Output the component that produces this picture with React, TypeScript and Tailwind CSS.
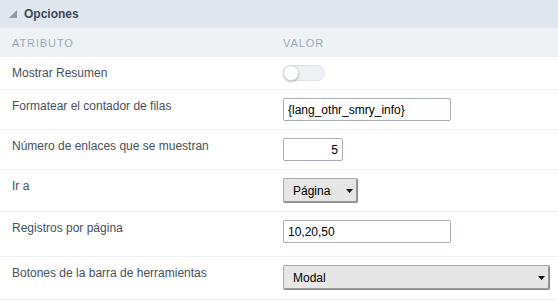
import React from 'react';

const font = { fontFamily: '"Liberation Sans", Arial, sans-serif' };

function Toggle() {
  return (
    <div className="relative h-[16px] w-[42px] rounded-full border border-[#dfe4e9] bg-[#eef1f4]">
      <div className="absolute -left-px -top-px h-[16px] w-[16px] rounded-full border border-[#d5d9de] bg-white shadow-[0_1px_2px_rgba(0,0,0,0.25)]" />
    </div>
  );
}

function TextInput({ value, width, right }: { value: string; width: string; right?: boolean }) {
  return (
    <div
      className={`flex h-[23px] items-center rounded-[2px] border border-[#a6adb5] bg-white px-[4px] text-[12px] text-black ${width} ${
        right ? 'justify-end' : ''
      }`}
    >
      {value}
    </div>
  );
}

function Select({ value, width }: { value: string; width: string }) {
  return (
    <div
      className={`flex h-[25px] items-center justify-between rounded-[2px] border border-[#a9a9a9] border-b-[#8c8c8c] border-r-[#8c8c8c] bg-[#e6e6e6] pl-[9px] pr-[4px] text-[12px] text-black shadow-[inset_-1px_-1px_0_#9a9a9a] ${width}`}
    >
      <span>{value}</span>
      <svg width="7" height="4" viewBox="0 0 7 4">
        <polygon points="0,0 7,0 3.5,4" fill="#111" />
      </svg>
    </div>
  );
}

const rows: Array<{ label: string; h: string; value: React.ReactNode }> = [
  { label: 'Mostrar Resumen', h: 'h-[33px]', value: <Toggle /> },
  { label: 'Formatear el contador de filas', h: 'h-[40px]', value: <TextInput value="{lang_othr_smry_info}" width="w-[168px]" /> },
  { label: 'Número de enlaces que se muestran', h: 'h-[40px]', value: <TextInput value="5" width="w-[60px]" right /> },
  { label: 'Ir a', h: 'h-[42px]', value: <Select value="Página" width="w-[75px]" /> },
  { label: 'Registros por página', h: 'h-[45px]', value: <TextInput value="10,20,50" width="w-[168px]" /> },
  { label: 'Botones de la barra de herramientas', h: 'h-[43px]', value: <Select value="Modal" width="w-[267px]" /> },
];

export default function App() {
  return (
    <div className="h-[301px] w-[558px] overflow-hidden bg-white" style={font}>
      {/* Title bar */}
      <div className="flex h-[30px] items-center gap-[7px] border-b-2 border-[#eef2f6] bg-[#e1e7ee] pl-[9px]">
        <svg width="8" height="8" viewBox="0 0 8 8">
          <polygon points="8,0 8,8 0,8" fill="#8d98a5" />
        </svg>
        <span className="text-[12px] font-bold text-[#3c4858]">Opciones</span>
      </div>

      {/* Column headers */}
      <div className="grid h-[27px] grid-cols-[271px_1fr] items-center bg-[#eef2f5] text-[11px] tracking-[0.9px] text-[#9aacbb]">
        <div className="pl-[12px]">ATRIBUTO</div>
        <div className="pl-[12px]">VALOR</div>
      </div>

      {rows.map((row) => (
        <div
          key={row.label}
          className={`grid grid-cols-[271px_1fr] items-start border-b border-[#eef1f4] pt-[8px] ${row.h}`}
        >
          <div className="pl-[12px] text-[12px] leading-[16px] text-[#46505b]">{row.label}</div>
          <div className="pl-[12px]">{row.value}</div>
        </div>
      ))}
    </div>
  );
}
